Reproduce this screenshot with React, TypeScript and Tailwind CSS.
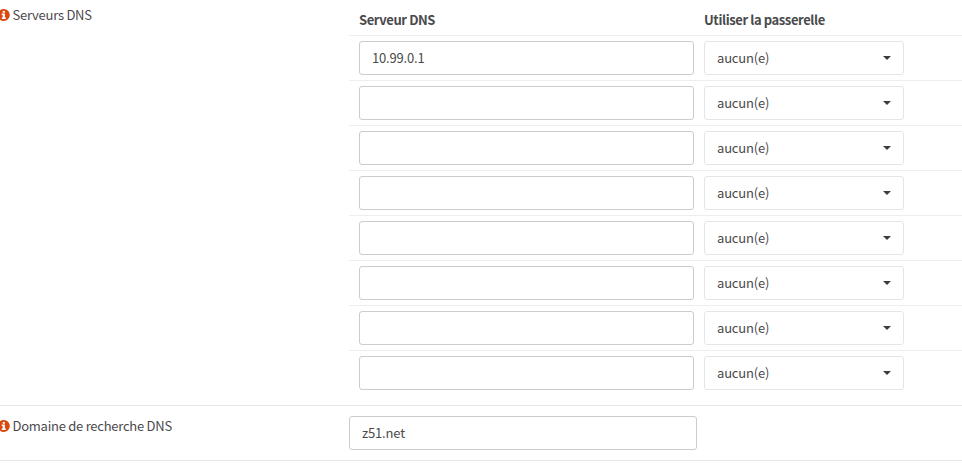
const rows = ["10.99.0.1", "", "", "", "", "", "", ""];

function Info() {
  return (
    <svg className="-ml-[2px] mr-[2.5px] h-3 w-3 shrink-0" viewBox="0 0 12 12">
      <circle cx="5.800" cy="6" r="6" fill="#d9480f" />
      <path d="M4.700 1.900h2.200v1.900H4.700zM3.700 4.600h3.200v4h1V10.100H3.700V8.600h1V6h-1z" fill="#fff" />
    </svg>
  );
}

function Label({ children }: { children: string }) {
  return (
    <div className="flex h-[18px] w-[349px] shrink-0 items-center">
      <Info />
      <span className="leading-[18px] tracking-[-0.25px]">{children}</span>
    </div>
  );
}

export default function App() {
  return (
    <div className="h-[464px] w-[962px] overflow-hidden bg-white font-['Noto_Sans_CJK_SC','Noto_Sans',sans-serif] text-[13px] tracking-[-0.17px] text-[#4a4a4c]">
      <div className="flex h-[406px] border-b border-[#e8e8e8] pt-[6px]">
        <Label>Serveurs DNS</Label>
        <div className="-mt-[6px] flex-1">
          <div className="flex h-[35px] items-end pb-[6px] pl-[10px] leading-[18px] font-bold tracking-[-0.4px]">
            <div className="w-[345px]">Serveur DNS</div>
            <div>Utiliser la passerelle</div>
          </div>
          {rows.map((v, i) => (
            <div key={i} className="flex h-[45px] gap-[10px] border-t border-[#eeeeee] pt-[5px] pl-[10px]">
              <div className="flex h-[34px] w-[335px] items-center rounded-[3px] border border-[#cccccc] px-3">{v}</div>
              <div className="flex h-[34px] w-[200px] items-center justify-between rounded-[3px] border border-[#e5e5e5] px-3">
                <span>aucun(e)</span>
                <svg className="h-1 w-2" viewBox="0 0 8 4"><path d="M0 0h8L4 4z" fill="#3c3c3b" /></svg>
              </div>
            </div>
          ))}
        </div>
      </div>
      <div className="flex h-[55px] border-b border-[#e8e8e8] pt-[10px]">
        <div className="pt-[1px]"><Label>Domaine de recherche DNS</Label></div>
        <div className="flex h-[34px] w-[348px] items-center rounded-[3px] border border-[#cccccc] px-3">z51.net</div>
      </div>
    </div>
  );
}
